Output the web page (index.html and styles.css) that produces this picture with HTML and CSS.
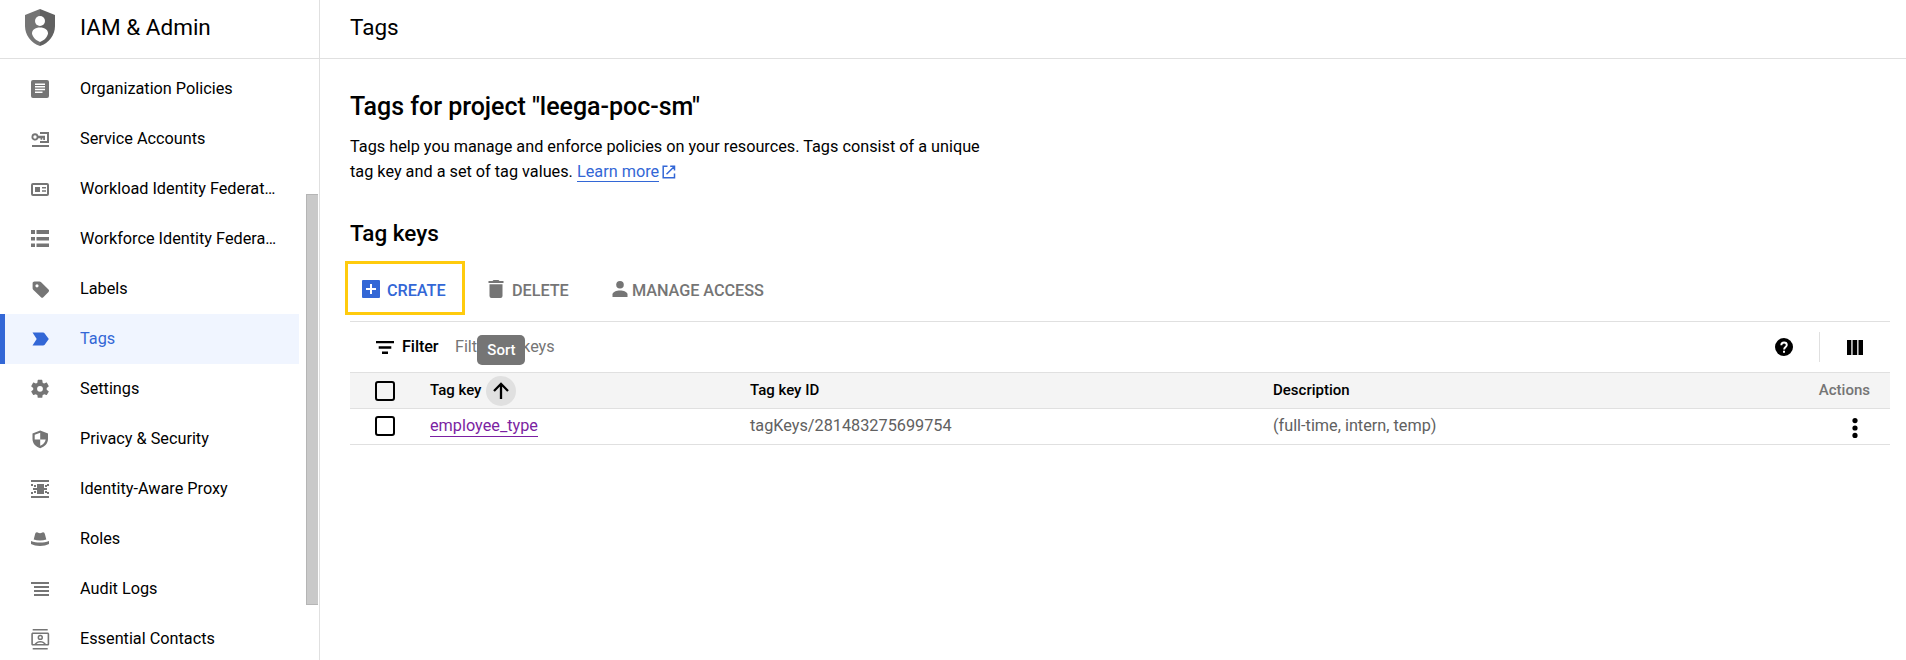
FILE: index.html
```
<!DOCTYPE html>
<html lang="en">
<head>
<meta charset="utf-8">
<title>Tags – IAM &amp; Admin</title>
<link rel="stylesheet" href="styles.css">
</head>
<body>
<div class="app">
  <aside class="sidebar">
    <header class="product">
      <svg class="shield" viewBox="0 0 30 37" width="30" height="37">
        <path fill="#757575" d="M15 0 0 6v11c0 9 6 17 15 20z"/>
        <path fill="#616161" d="M15 0l15 6v11c0 9-6 17-15 20z"/>
        <circle cx="15" cy="12" r="5" fill="#fff"/>
        <path fill="#fff" d="M7 24.500c0-3.500 3-6 8-6s8 2.500 8 6c-.8 4-4 7-8 8.500-4-1.500-7.200-4.500-8-8.500z"/>
      </svg>
      <span class="product-name">IAM &amp; Admin</span>
    </header>
    <nav class="nav">
      <a class="item"><svg class="ico" viewBox="0 0 20 20"><path fill-rule="evenodd" d="M3 1h14a2 2 0 0 1 2 2v14a2 2 0 0 1-2 2H3a2 2 0 0 1-2-2V3a2 2 0 0 1 2-2zm2 3.500V6h10V4.500zm0 2.600v1.500h10V7.100zm0 2.700v1.500h10V9.800zm0 2.700V14h7.500v-1.500z"/></svg><span>Organization Policies</span></a>
      <a class="item"><svg class="ico" viewBox="0 0 20 20"><path d="M2 16h17v2H2zM10 3h9v11h-9v-2h7V5h-7z"/><path fill-rule="evenodd" d="M5 4.300a3.600 3.600 0 0 1 3.500 2.400H15v4.200h-1.800V9.300h-.9v1.500h-1.800V9.300H8.400A3.600 3.600 0 1 1 5 4.300zm0 2a1.700 1.700 0 1 0 0 3.400 1.700 1.700 0 0 0 0-3.400z"/></svg><span>Service Accounts</span></a>
      <a class="item"><svg class="ico" viewBox="0 0 20 20"><path fill-rule="evenodd" d="M3 4h14a2 2 0 0 1 2 2v9a2 2 0 0 1-2 2H3a2 2 0 0 1-2-2V6a2 2 0 0 1 2-2zm0 2v9h14V6zm2 2h5v5H5zm7 0h4v1.500h-4zm0 3.200h4v1.500h-4z"/></svg><span>Workload Identity Federat…</span></a>
      <a class="item"><svg class="ico" viewBox="0 0 20 20"><path d="M1 1h4v4H1zm5.500 0H19v4H6.500zM1 8h4v3.500H1zm5.500 0H19v3.500H6.500zM1 14.500h4V18H1zm5.500 0H19V18H6.500z"/></svg><span>Workforce Identity Federa…</span></a>
      <a class="item"><svg class="ico" viewBox="0 0 20 20"><path fill-rule="evenodd" d="M4.500 2.500h5c.6 0 1 .2 1.400.6l7.600 7.500c.7.700.7 1.600 0 2.300l-5.200 5.300c-.7.700-1.600.7-2.300 0L3.200 10.700c-.4-.4-.6-.9-.6-1.400v-5c0-1 .9-1.800 1.900-1.800zM7 5.200a1.600 1.600 0 1 0 0 3.200 1.600 1.600 0 0 0 0-3.200z"/></svg><span>Labels</span></a>
      <a class="item active"><svg class="ico" viewBox="0 0 20 20"><path d="M2.500 3.500H13c.8 0 1.300.3 1.700.9l4.100 5.700-4.100 5.600c-.4.600-.9.800-1.700.8H2.500l4.200-6.400z"/></svg><span>Tags</span></a>
      <a class="item"><svg class="ico" viewBox="0.700 0.500 23.400 23.400"><path d="M20.200 13c.05-.3.070-.65.070-1s0-.7-.070-1l2.300-1.700c.2-.15.250-.4.100-.65l-2.100-3.700c-.15-.250-.4-.3-.65-.25l-2.600 1.050c-.55-.4-1.100-.75-1.750-1L15.100 2c0-.250-.25-.5-.5-.5h-4.400c-.25 0-.5.250-.5.500l-.4 2.750c-.65.250-1.200.6-1.750 1L4.950 4.700c-.25-.1-.5 0-.65.25L2.200 8.650c-.15.250-.1.500.1.650L4.500 11c-.05.300-.07.650-.07 1s.02.700.07 1l-2.200 1.700c-.2.150-.25.4-.1.650l2.100 3.700c.15.250.4.3.65.250l2.600-1.050c.55.400 1.100.750 1.750 1l.4 2.750c0 .250.250.5.500.5h4.400c.250 0 .5-.250.5-.5l.4-2.750c.65-.250 1.200-.6 1.750-1l2.600 1.050c.250.1.5 0 .65-.250l2.100-3.700c.15-.250.1-.5-.1-.65zM12.400 15.400a3.400 3.400 0 1 1 0-6.800 3.400 3.400 0 0 1 0 6.800z"/></svg><span>Settings</span></a>
      <a class="item"><svg class="ico" viewBox="0 0 20 20"><path fill-rule="evenodd" d="M10.200 1.500 18 4.500v5.500c0 4.200-3.200 7.800-7.800 9.200-4.600-1.400-7.700-5-7.700-9.200V4.500zm0 2.200L4.700 5.800v4.700h5.500v6.300c3-1.100 5-3.400 5.500-6.300h-5.500z"/></svg><span>Privacy &amp; Security</span></a>
      <a class="item"><svg class="ico" viewBox="0 0 20 20"><path d="M1 1h18v2H1zM1 17h18v2H1zM7 5h7v10H7zM3 9h14v2H3zM1 5h2v2H1zm3 1h2v2H4zm11 0h2v2h-2zm2-1h2v2h-2zM1 13h2v2H1zm3-1h2v2H4zm11 0h2v2h-2zm2 1h2v2h-2z"/></svg><span>Identity-Aware Proxy</span></a>
      <a class="item"><svg class="ico" viewBox="0 0 20 20"><path d="M3.700 10.500 5 5.500c.4-1.600 1-2.300 2-2.200 1 .1 1.200 1 3 1s2-.9 3-1c1-.1 1.600.6 2 2.200l1.300 5c-4 1.200-8.600 1.200-12.600 0zM1 12c5.500 2 12.500 2 18 0v3c-2.500 1.300-5.500 2-9 2s-6.500-.7-9-2z"/></svg><span>Roles</span></a>
      <a class="item"><svg class="ico" viewBox="0 0 20 20"><path d="M1 3h18v2H1zm3 4h15v2H4zm0 4h15v2H4zm0 4h15v2H4z"/></svg><span>Audit Logs</span></a>
      <a class="item"><svg class="ico tall" viewBox="0 0 20 22"><path fill-rule="evenodd" d="M2.700 1h15v1.500h-15zM2.700 20h15v1.500h-15zM3 4.500h14.500c1 0 1.700.6 1.700 1.500v10c0 1-.7 1.600-1.700 1.600H3c-1 0-1.700-.6-1.700-1.600V6c0-.9.7-1.500 1.700-1.500zM2.900 6v10h1.600c1.500-2 3.500-3 5.800-3s4.200 1 5.700 3h1.600V6zm7.400.7a2.700 2.700 0 1 1 0 5.400 2.700 2.700 0 0 1 0-5.400zm0 1.500a1.200 1.200 0 1 0 0 2.400 1.200 1.200 0 0 0 0-2.400zM6.600 16H14c-2-1.900-5.400-1.900-7.400 0z"/></svg><span>Essential Contacts</span></a>
      <div class="scrollbar"></div>
    </nav>
  </aside>
  <main class="main">
    <header class="topbar">Tags</header>
    <section class="content">
      <h1 class="h1">Tags for project "leega-poc-sm"</h1>
      <p class="intro">Tags help you manage and enforce policies on your resources. Tags consist of a unique<br>tag key and a set of tag values. <a class="learn">Learn more</a><svg class="ext" viewBox="0 0 14 14" width="14" height="14"><path fill="none" stroke="#3367d6" stroke-width="1.500" d="M5.500 1.200H1.200v11.600h11.300V8.500M8.200 1.200h4.300v4.300M12.300 1.500 4.500 9.300"/></svg></p>
      <h2 class="h2">Tag keys</h2>
      <div class="actions">
        <button class="act create"><svg viewBox="0 0 18 18" width="18" height="18"><path fill-rule="evenodd" d="M1 0h16a1 1 0 0 1 1 1v16a1 1 0 0 1-1 1H1a1 1 0 0 1-1-1V1a1 1 0 0 1 1-1zM8 4v4H4v2h4v4h2v-4h4V8h-4V4z"/></svg><span>CREATE</span></button>
        <button class="act delete"><svg viewBox="0 0 16 18" width="16" height="18"><path d="M5.500 0h5l1 1H15.500v2H.5V1h4zM1.500 4.200h13v11.800a2 2 0 0 1-2 2h-9a2 2 0 0 1-2-2z"/></svg><span>DELETE</span></button>
        <button class="act manage"><svg viewBox="0 0 16 16" width="16" height="16"><circle cx="8" cy="3.800" r="3.800"/><path d="M8 9.500c3.500 0 7.500 1.500 7.500 4V16H.5v-2.500c0-2.500 4-4 7.500-4z"/></svg><span>MANAGE ACCESS</span></button>
      </div>
      <div class="filter">
        <svg viewBox="0 0 18 13" width="18" height="13"><path d="M0 0h18v2.300H0zm2.700 5.300h12.600v2.400H2.700zM6 10.500h6V13H6z"/></svg>
        <span class="filter-label">Filter</span>
        <span class="filter-hint">Filter tag keys</span>
        <div class="filter-tools">
          <svg class="help" viewBox="0 0 18 18" width="18" height="18"><circle cx="9" cy="9" r="9"/><path fill="none" stroke="#fff" stroke-width="1.900" d="M6.300 7.200c0-3.700 5.500-3.500 5.500-.2 0 1.900-2.700 2-2.700 4.500"/><path fill="#fff" d="M8 12.700h2v2H8z"/></svg>
          <i class="sep"></i>
          <svg class="cols" viewBox="0 0 16 15" width="16" height="15"><path d="M0 0h4.300v15H0zm5.600 0h4.600v15H5.600zm5.900 0H16v15h-4.500z"/></svg>
        </div>
      </div>
      <div class="row head">
        <i class="check"></i>
        <div class="cell key"><span>Tag key</span><span class="sort"><svg viewBox="0 0 16 17" width="16" height="17"><path fill="none" stroke="#000" stroke-width="2.300" d="M8 17V2M1 9l7-7.200L15 9"/></svg><span class="tooltip">Sort</span></span></div>
        <div class="cell id">Tag key ID</div>
        <div class="cell desc">Description</div>
        <div class="cell last">Actions</div>
      </div>
      <div class="row">
        <i class="check"></i>
        <div class="cell key"><a class="visited">employee_type</a></div>
        <div class="cell id">tagKeys/281483275699754</div>
        <div class="cell desc">(full-time, intern, temp)</div>
        <div class="cell last"><svg class="dots" viewBox="0 0 6 20" width="6" height="20"><circle cx="3" cy="2.600" r="2.600"/><circle cx="3" cy="10" r="2.600"/><circle cx="3" cy="17.400" r="2.600"/></svg></div>
      </div>
    </section>
  </main>
</div>
</body>
</html>
```
FILE: styles.css
```
* { box-sizing: border-box; }
body { margin: 0; background: #fff; color: #000; font: 16.25px/25px Roboto, sans-serif; }
svg { display: block; flex: none; }
.app { display: flex; width: 1906px; height: 660px; overflow: hidden; }

.sidebar { width: 320px; flex: none; border-right: 1px solid #e0e0e0; }
.product { height: 59px; border-bottom: 1px solid #e0e0e0; display: flex; align-items: center; padding: 0 0 4px 25px; }
.product-name { margin-left: 25px; font-size: 22.5px; }
.nav { position: relative; padding-top: 5px; }
.item { display: flex; align-items: center; height: 50px; width: 299px; padding-left: 30px; font-size: 16.25px; white-space: nowrap; }
.item span { margin: -2px 0 0 30px; }
.ico { width: 20px; height: 20px; fill: #757575; }
.tall { height: 22px; }
.active { background: #f0f5ff; color: #3367d6; padding-left: 25px; border-left: 5px solid #3367d6; }
.active .ico { fill: #3367d6; }
.scrollbar { position: absolute; left: 306px; top: 135px; width: 12px; height: 411px; background: #c9c9c9; border: 1px solid #b5b5b5; border-right: 0; }

.main { flex: 1; min-width: 0; }
.topbar { height: 59px; border-bottom: 1px solid #e0e0e0; padding: 0 0 4px 30px; display: flex; align-items: center; font-size: 22.5px; }
.content { padding: 33px 16px 0 30px; }
.h1 { margin: 0; font-size: 25px; line-height: 30px; font-weight: 500; letter-spacing: -0.03px; }
.intro { margin: 12px 0 0; font-size: 16.25px; line-height: 25px; white-space: nowrap; }
.learn { color: #3367d6; border-bottom: 1px solid #3367d6; }
.ext { display: inline-block; margin-left: 3px; vertical-align: -2px; }
.h2 { margin: 34px 0 0; font-size: 22.5px; line-height: 30px; font-weight: 500; }
.actions { display: flex; height: 54px; margin: 13px 0 6px -5px; align-items: center; }
.act { display: flex; align-items: center; background: none; border: 0; padding: 2px 0 0; color: #757575; fill: #757575; font: 500 16.25px/25px Roboto, sans-serif; }
.act span { padding-top: 2px; letter-spacing: -0.06px; }
.create { width: 120px; height: 54px; border: 3px solid #ffcb0d; padding-left: 14px; color: #3367d6; fill: #3367d6; gap: 7px; }
.delete { margin-left: 23px; gap: 8px; width: 124px; }
.manage { gap: 4px; }

.filter { display: flex; align-items: center; height: 51px; border-top: 1px solid #e0e0e0; padding-left: 26px; }
.filter-label { margin: -2px 0 0 8px; width: 53px; font-weight: 500; letter-spacing: -0.1px; }
.filter-hint { margin-top: -2px; color: #757575; letter-spacing: -0.05px; }
.filter-tools { margin-left: auto; display: flex; align-items: center; padding-right: 27px; }
.sep { width: 1px; height: 30px; background: #e0e0e0; margin: 0 28px 0 26px; }
.help, .sep { transform: translateX(1px); }

.row { display: flex; align-items: center; height: 36px; border-top: 1px solid #e0e0e0; padding: 0 20px 0 25px; color: #616161; }
.row:last-child { height: 37px; border-bottom: 1px solid #e0e0e0; }
.check { width: 20px; height: 20px; margin-top: -1px; border: 2px solid #000; border-radius: 3px; }
.head { background: #f4f4f4; color: #000; font-weight: 500; font-size: 15px; }
.head .check { margin-top: 0; }
.cell { margin-top: -2px; }
.head .cell { margin-top: -1px; }
.key { width: 320px; margin-left: 35px; display: flex; align-items: center; }
.id { width: 523px; }
.last { margin-left: auto; color: #757575; }
.visited { margin-top: 2px; color: #7b1fa2; border-bottom: 1px solid #7b1fa2; line-height: 20px; }
.sort { position: relative; width: 30px; height: 30px; margin: 1px 0 0 5px; border-radius: 50%; background: #e0e0e0; display: flex; align-items: center; justify-content: center; }
.tooltip { position: absolute; left: -9px; top: -41px; width: 48px; height: 30px; border-radius: 5px; background: #757575; color: #fff; font-size: 15px; line-height: 30px; text-align: center; }
.dots { margin: 4px 12px 0 0; }
```
